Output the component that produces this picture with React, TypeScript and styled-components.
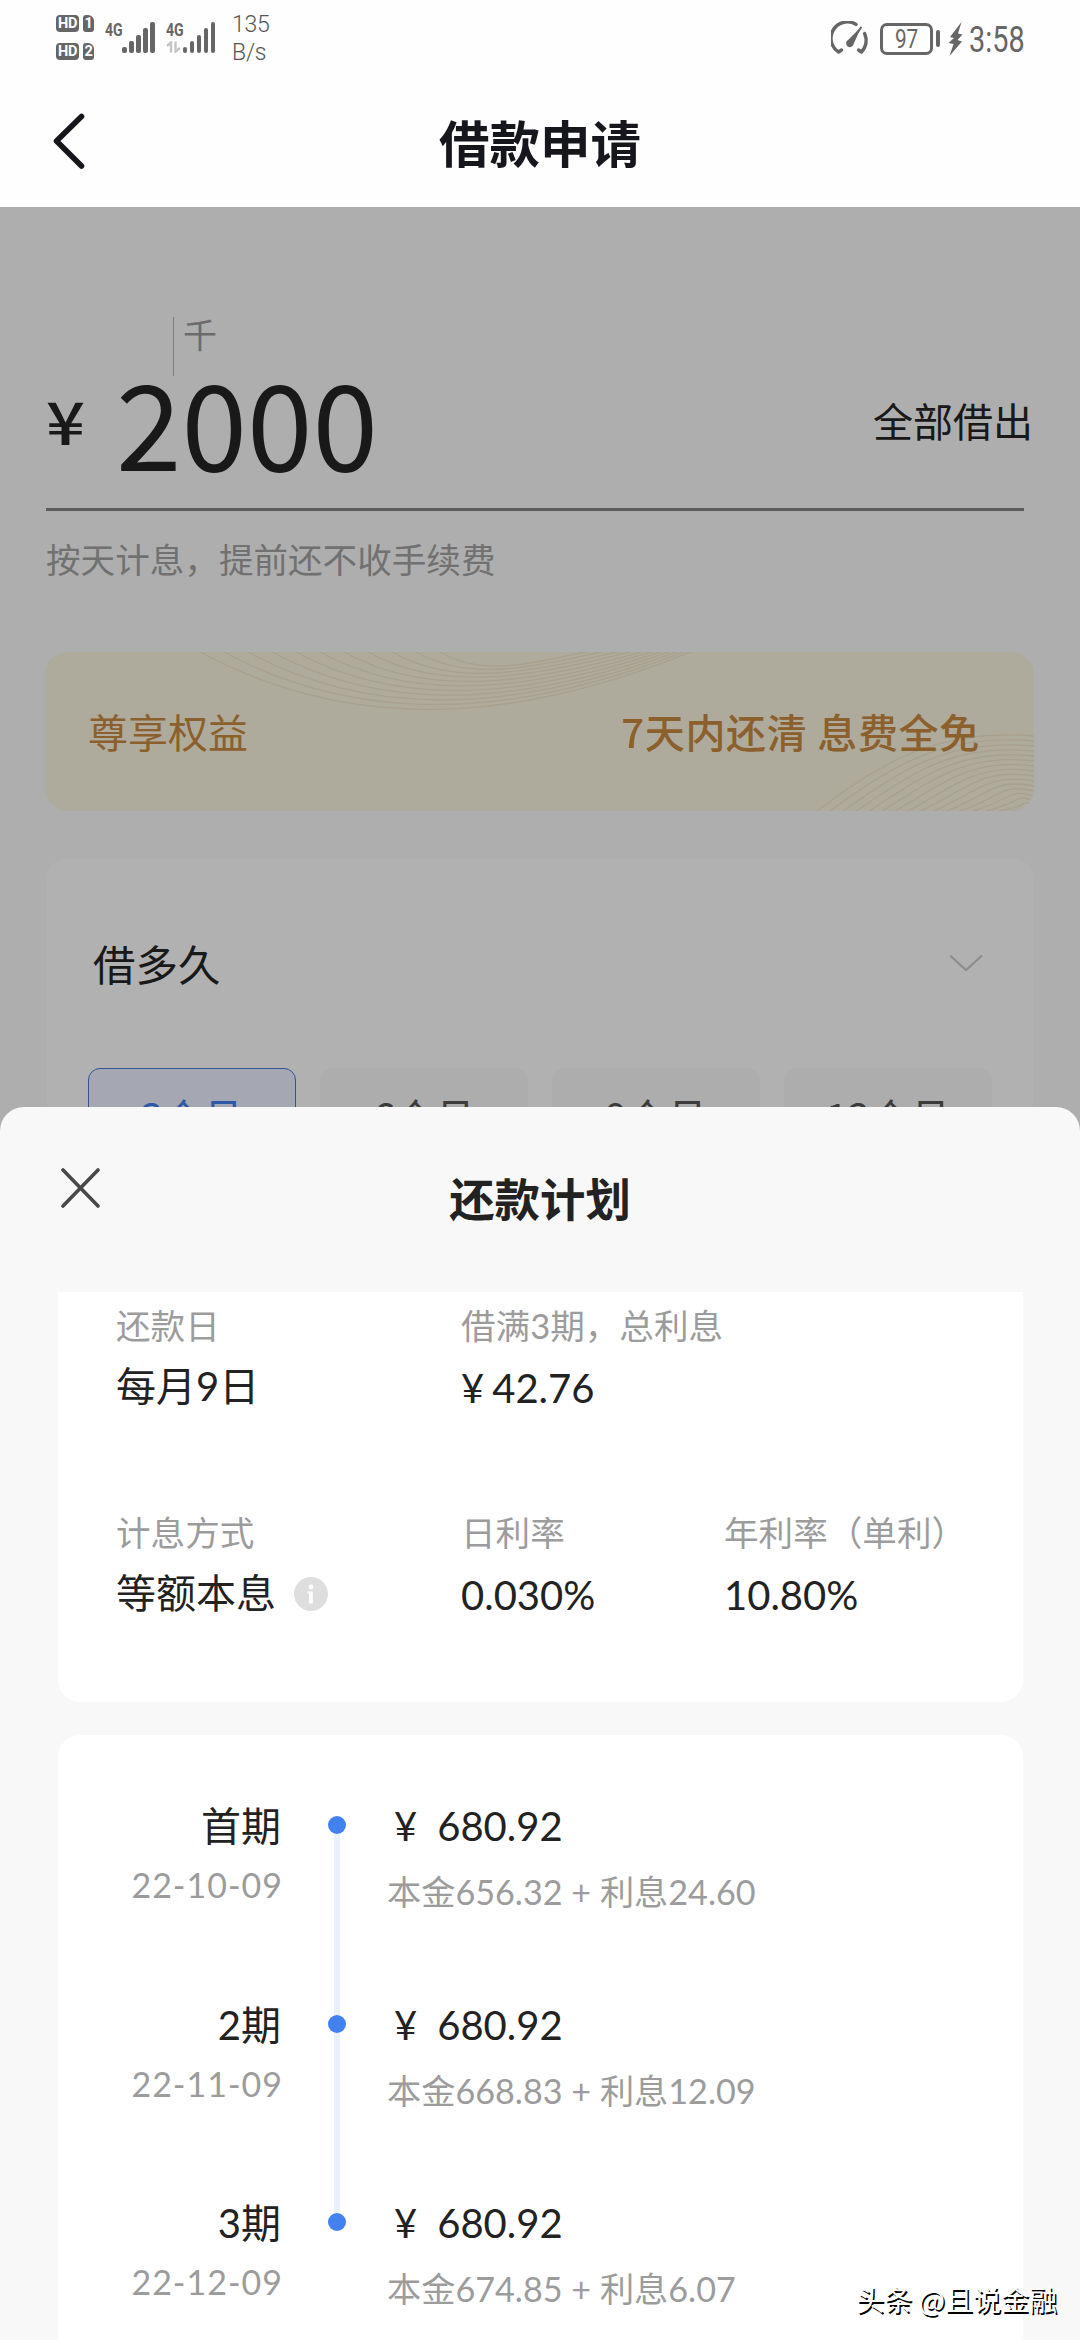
import React from 'react';
import styled, { createGlobalStyle } from 'styled-components';

const cjk = '"Noto Sans CJK SC", sans-serif';
const num = 'Lato, "Noto Sans CJK SC", sans-serif';

const GlobalStyle = createGlobalStyle`
  * { box-sizing: border-box; }
  body { margin: 0; background: #fafafa; font-family: ${cjk}; }
  svg { display: block; }
`;

const Screen = styled.div`
  position: relative;
  width: 1080px;
  height: 2340px;
  overflow: hidden;
  background: #fafafa;
`;

/* ---------- status bar ---------- */

const StatusBar = styled.div`
  height: 74px;
  padding: 15px 56px 0;
  display: flex;
  justify-content: space-between;
  align-items: flex-start;
  background: #fefefe;
  color: #666;
  font-family: Roboto, sans-serif;
`;

const StatusGroup = styled.div`
  display: flex;
  align-items: flex-start;
`;

const HdStack = styled.div`
  display: flex;
  flex-direction: column;
  gap: 11px;
`;

const HdRow = styled.div`
  display: flex;
  gap: 4px;
`;

const HdBadge = styled.span<{ $w: number }>`
  width: ${(p) => p.$w}px;
  height: 17px;
  border-radius: 4px;
  background: #666;
  color: #fff;
  font: 700 14.5px/17.5px Roboto, sans-serif;
  text-align: center;
  letter-spacing: -0.4px;
`;

const SimBadge = styled(HdBadge)`
  border-radius: 3px 6px 3px 3px;
`;

const Signal = styled.div<{ $ml: number }>`
  display: flex;
  margin: 7px 0 0 ${(p) => p.$ml}px;
`;

const NetColumn = styled.div`
  width: 17px;
  height: 31px;
  display: flex;
  flex-direction: column;
  justify-content: space-between;
`;

const NetLabel = styled.span`
  font: 700 19px/15px Roboto, sans-serif;
  transform: scaleX(0.74);
  transform-origin: left;
`;

const Bars = styled.div`
  display: flex;
  align-items: flex-end;
  gap: 2.5px;
  height: 31px;
`;

const Bar = styled.i<{ $h: number }>`
  width: 4.5px;
  height: ${(p) => p.$h}px;
  border-radius: 2px;
  background: #666;
`;

const Speed = styled.div`
  margin: -4px 0 0 17px;
  font: 300 23px/27.5px Roboto, sans-serif;
  color: #555;
  letter-spacing: -0.2px;
`;

const Battery = styled.div`
  width: 53px;
  height: 32px;
  margin: 8px 3px 0 11px;
  border: 3px solid #666;
  border-radius: 7px;
  font: 400 26px/27px Roboto, sans-serif;
  display: flex;
  justify-content: center;
`;

const Squeezed = styled.span`
  transform: scaleX(0.8);
`;

const BatteryNub = styled.i`
  width: 4px;
  height: 17px;
  margin-top: 15px;
  border-radius: 2px;
  background: #666;
`;

const Clock = styled.span`
  width: 55px;
  margin: 6px 0 0 6px;
  font: 400 36.5px/38px Roboto, sans-serif;
  white-space: nowrap;
  transform: scaleX(0.79);
  transform-origin: left;
`;

const GaugeIcon = styled.svg`
  margin-top: 6px;
`;

const BoltIcon = styled.svg`
  margin: 7px 0 0 8px;
`;

/* ---------- title bar ---------- */

const TitleBar = styled.header`
  height: 133px;
  padding: 0 52px;
  display: grid;
  grid-template-columns: 40px 1fr 40px;
  align-items: center;
  background: #fefefe;
`;

const PageTitle = styled.h1`
  margin: 0;
  text-align: center;
  font: 700 50.5px/70px ${cjk};
  color: #16161d;
`;

/* ---------- loan form ---------- */

const Form = styled.main`
  padding: 110px 46px 0;
`;

const UnitMark = styled.div`
  height: 59px;
  margin-left: 127px;
  padding-left: 9px;
  border-left: 1px solid #b4b4b4;
  font-size: 34px;
  line-height: 34px;
  color: #9a9a9a;
`;

const AmountRow = styled.div`
  display: flex;
  align-items: flex-start;
  height: 135px;
  padding-top: 2px;
  width: 978px;
  border-bottom: 3px solid #858585;
  line-height: 84px;
  color: #252525;
`;

const Currency = styled.span`
  width: 70px;
  font-size: 59px;
  font-weight: 500;
  transform: scaleX(1.16);
  transform-origin: left;
`;

const Amount = styled.span`
  font-size: 118px;
`;

const BorrowAll = styled.span`
  margin: 0 -9px 0 auto;
  font-size: 40px;
`;

const Hint = styled.p`
  margin: 22px 0 0;
  font-size: 34.6px;
  line-height: 50px;
  color: #a2a2a2;
`;

const Banner = styled.section`
  position: relative;
  height: 159px;
  margin: 69px 0 0 -1px;
  width: 989px;
  padding: 0 54px 1px 43px;
  display: flex;
  align-items: center;
  justify-content: space-between;
  border-radius: 22px;
  overflow: hidden;
  background: #fbf5e0;
  color: #c98a40;
  font-size: 40px;
`;

const BannerArt = styled.svg`
  position: absolute;
  inset: 0;
`;

const BannerText = styled.span<{ $strong?: boolean }>`
  position: relative;
  font-weight: ${(p) => (p.$strong ? 500 : 400)};
  letter-spacing: ${(p) => (p.$strong ? 0.7 : 0)}px;
`;

const TermCard = styled.section`
  margin: 48px 0 0 1px;
  width: 986px;
  height: 400px;
  padding: 74px 41px 0;
  border-radius: 20px;
  background: #fefefe;
`;

const TermHead = styled.div`
  display: flex;
  justify-content: space-between;
  align-items: center;
  padding: 0 9px 0 5px;
  font-size: 42.5px;
  line-height: 60px;
  color: #252525;
`;

const TermOptions = styled.div`
  display: grid;
  grid-template-columns: repeat(4, 208px);
  gap: 24px;
  margin-top: 75px;
`;

const TermOption = styled.div<{ $active: boolean }>`
  height: 96px;
  border-radius: 12px;
  border: ${(p) => (p.$active ? '1.5px solid #4a78d8' : '1.5px solid transparent')};
  background: ${(p) => (p.$active ? '#ecf0ff' : '#f8f8f8')};
  color: ${(p) => (p.$active ? '#4380ee' : '#555')};
  text-align: center;
  font-size: 40px;
  line-height: 94px;
`;

const Mask = styled.div`
  position: absolute;
  inset: 207px 0 0;
  background: rgba(0, 0, 0, 0.3);
`;

/* ---------- bottom sheet ---------- */

const Sheet = styled.section`
  position: absolute;
  inset: 1107px 0 0;
  border-radius: 24px 24px 0 0;
  background: #f8f8f8;
  overflow: hidden;
`;

const SheetHead = styled.div`
  height: 185px;
  padding: 60px 60px 0;
  display: grid;
  grid-template-columns: 40px 1fr 40px;
  align-items: start;
`;

const SheetTitle = styled.h2`
  margin: 0;
  text-align: center;
  font: 700 45.4px/60px ${cjk};
  color: #222;
`;

const Summary = styled.div`
  margin: 0 57px 0 58px;
  height: 410px;
  padding: 11px 0 0 58px;
  display: grid;
  grid-template-columns: 345px 263px 1fr;
  align-content: start;
  row-gap: 89px;
  border-radius: 0 0 22px 22px;
  background: #fff;
  font-family: ${num};
`;

const Label = styled.div`
  font-size: 34.6px;
  line-height: 46px;
  color: #9c9c9c;
  white-space: nowrap;
`;

const Value = styled.div<{ $numeric?: boolean }>`
  display: flex;
  align-items: center;
  margin-top: 7px;
  height: ${(p) => (p.$numeric ? 65 : 61)}px;
  line-height: ${(p) => (p.$numeric ? 65 : 61)}px;
  font-size: 40px;
  color: #222;
`;

const Yen = styled.span<{ $gap: number }>`
  margin-right: ${(p) => p.$gap}px;
`;

const InfoIcon = styled.svg`
  margin-left: 18px;
`;

const Plan = styled.div`
  margin: 33px 57px 0 58px;
  height: 640px;
  padding-top: 61px;
  border-radius: 22px 22px 0 0;
  background: #fff;
  font-family: ${num};
`;

const PlanRow = styled.div`
  display: grid;
  grid-template-columns: 223px 18px 1fr;
  height: 198.6px;
`;

const Period = styled.div`
  text-align: right;
`;

const Strong = styled.div`
  font-size: 40px;
  line-height: 60px;
  color: #222;
`;

const DateText = styled.div`
  margin: 6px -2px 0 0;
  font-size: 34px;
  line-height: 46px;
  letter-spacing: 1px;
  color: #9c9c9c;
`;

const Track = styled.div`
  margin: 0 -47px 0 47px;
  display: flex;
  flex-direction: column;
  align-items: center;
`;

const Line = styled.i<{ $h?: number; $hidden?: boolean }>`
  width: 6px;
  flex: ${(p) => (p.$h ? `0 0 ${p.$h}px` : '1 0 0')};
  background: ${(p) => (p.$hidden ? 'transparent' : '#e9f0fc')};
`;

const Dot = styled.i`
  width: 18px;
  height: 18px;
  border-radius: 50%;
  background: #4182f0;
`;

const Payment = styled.div`
  padding-left: 88px;
`;

const PayAmount = styled(Strong)`
  padding-left: 7px;
`;

const Detail = styled.div`
  margin-top: 13px;
  font-size: 34.2px;
  line-height: 46px;
  color: #9c9c9c;
`;

const Watermark = styled.div`
  position: absolute;
  right: 23px;
  bottom: 21px;
  font: 400 28px/40px ${cjk};
  color: #fff;
  text-shadow: 1.5px 1.5px 0 #000;
`;

const barHeights = [6, 12, 18, 25, 31];

const SignalBars = () => (
  <Bars>
    {barHeights.map((h) => (
      <Bar key={h} $h={h} />
    ))}
  </Bars>
);

const terms = ['3个月', '6个月', '9个月', '12个月'];

const plan = [
  { period: '首期', date: '22-10-09', amount: '680.92', detail: '本金656.32 + 利息24.60' },
  { period: '2期', date: '22-11-09', amount: '680.92', detail: '本金668.83 + 利息12.09' },
  { period: '3期', date: '22-12-09', amount: '680.92', detail: '本金674.85 + 利息6.07' },
];

export default function App() {
  return (
    <Screen>
      <GlobalStyle />
      <StatusBar>
        <StatusGroup>
          <HdStack>
            {['1', '2'].map((n) => (
              <HdRow key={n}>
                <HdBadge $w={23}>HD</HdBadge>
                <SimBadge $w={11}>{n}</SimBadge>
              </HdRow>
            ))}
          </HdStack>
          <Signal $ml={11}>
            <NetColumn>
              <NetLabel>4G</NetLabel>
            </NetColumn>
            <SignalBars />
          </Signal>
          <Signal $ml={11}>
            <NetColumn>
              <NetLabel>4G</NetLabel>
              <svg width="15" height="12" viewBox="0 0 15 12" fill="none" stroke="#c4c4c4" strokeWidth="2.4">
                <path d="M1 5 L5 1.5 V11.5 M9.5 0.5 V10.5 L14 7" />
              </svg>
            </NetColumn>
            <SignalBars />
          </Signal>
          <Speed>
            135
            <br />
            B/s
          </Speed>
        </StatusGroup>
        <StatusGroup>
          <GaugeIcon width="38" height="34" viewBox="0 0 38 34" fill="none" stroke="#666" strokeLinecap="round">
            <path d="M25 3.4 A16.3 16.3 0 0 0 7.6 31 L10.5 29" strokeWidth="3.4" strokeLinejoin="round" />
            <path d="M33.6 12.5 A16.3 16.3 0 0 1 30.4 31 L27.6 29" strokeWidth="3.4" strokeLinejoin="round" />
            <path d="M30.5 5.5 L17 19 A3.8 3.8 0 1 0 22.6 23 Z" fill="#666" stroke="none" />
            <path d="M30 6.5 L20 21" strokeWidth="2" />
          </GaugeIcon>
          <Battery>
            <Squeezed>97</Squeezed>
          </Battery>
          <BatteryNub />
          <BoltIcon width="15" height="34" viewBox="0 0 15 34" fill="#666">
            <path d="M13.5 0 L2 15 L6 16 L0.5 21 L5.5 22 L1.5 34 L14 19.5 L9.5 18 L14.5 12.5 L10 11.5 Z" />
          </BoltIcon>
          <Clock>3:58</Clock>
        </StatusGroup>
      </StatusBar>

      <TitleBar>
        <svg width="36" height="58" viewBox="0 0 36 58" fill="none" stroke="#17171b" strokeWidth="5.6" strokeLinecap="round" strokeLinejoin="round">
          <path d="M29.5 4.5 L4.5 29 L29.5 54" />
        </svg>
        <PageTitle>借款申请</PageTitle>
      </TitleBar>

      <Form>
        <UnitMark>千</UnitMark>
        <AmountRow>
          <Currency>¥</Currency>
          <Amount>2000</Amount>
          <BorrowAll>全部借出</BorrowAll>
        </AmountRow>
        <Hint>按天计息，提前还不收手续费</Hint>

        <Banner>
          <BannerArt width="989" height="159" viewBox="0 0 989 159" fill="none" stroke="#e6cfb0" strokeWidth="1.4" opacity="0.4">
            {Array.from({ length: 11 }, (_, i) => (
              <path key={i} d={`M${155 + i * 24} 0 C${270 + i * 18} ${62 - i * 3} ${430 + i * 8} ${92 - i * 9} ${660 - i * 4} ${-6 - i}`} />
            ))}
            {Array.from({ length: 17 }, (_, i) => (
              <path key={`r${i}`} d={`M${772 + i * 13} 159 C${835 + i * 11} ${112 + i * 3} ${890 + i * 6} ${76 + i * 5} 989 ${84 + i * 5}`} />
            ))}
          </BannerArt>
          <BannerText>尊享权益</BannerText>
          <BannerText $strong>7天内还清 息费全免</BannerText>
        </Banner>

        <TermCard>
          <TermHead>
            借多久
            <svg width="34" height="18" viewBox="0 0 34 18" fill="none" stroke="#cbcbcb" strokeWidth="2.2">
              <path d="M1 1.5 L17 16 L33 1.5" />
            </svg>
          </TermHead>
          <TermOptions>
            {terms.map((t, i) => (
              <TermOption key={t} $active={i === 0}>
                {t}
              </TermOption>
            ))}
          </TermOptions>
        </TermCard>
      </Form>

      <Mask />

      <Sheet>
        <SheetHead>
          <svg width="40" height="42" viewBox="0 0 40 42" fill="none" stroke="#484848" strokeWidth="3.6" strokeLinecap="round">
            <path d="M3 3 L38 39 M38 3 L3 39" />
          </svg>
          <SheetTitle>还款计划</SheetTitle>
        </SheetHead>

        <Summary>
          <div>
            <Label>还款日</Label>
            <Value>每月9日</Value>
          </div>
          <div>
            <Label>借满3期，总利息</Label>
            <Value $numeric>
              <Yen $gap={8}>¥</Yen>42.76
            </Value>
          </div>
          <div />
          <div>
            <Label>计息方式</Label>
            <Value>
              等额本息
              <InfoIcon width="34" height="34" viewBox="0 0 34 34">
                <circle cx="17" cy="17" r="17" fill="#dedede" />
                <circle cx="17" cy="10" r="2.4" fill="#fff" />
                <path d="M13.5 14.5 H18.8 V26.5 H15 V16.5 H13.5 Z" fill="#fff" />
              </InfoIcon>
            </Value>
          </div>
          <div>
            <Label>日利率</Label>
            <Value $numeric>0.030%</Value>
          </div>
          <div>
            <Label>年利率（单利）</Label>
            <Value $numeric>10.80%</Value>
          </div>
        </Summary>

        <Plan>
          {plan.map((row, i) => (
            <PlanRow key={row.date}>
              <Period>
                <Strong>{row.period}</Strong>
                <DateText>{row.date}</DateText>
              </Period>
              <Track>
                <Line $h={20} $hidden={i === 0} />
                <Dot />
                <Line $hidden={i === plan.length - 1} />
              </Track>
              <Payment>
                <PayAmount>
                  <Yen $gap={20}>¥</Yen>
                  {row.amount}
                </PayAmount>
                <Detail>{row.detail}</Detail>
              </Payment>
            </PlanRow>
          ))}
        </Plan>
      </Sheet>

      <Watermark>头条 @且说金融</Watermark>
    </Screen>
  );
}
